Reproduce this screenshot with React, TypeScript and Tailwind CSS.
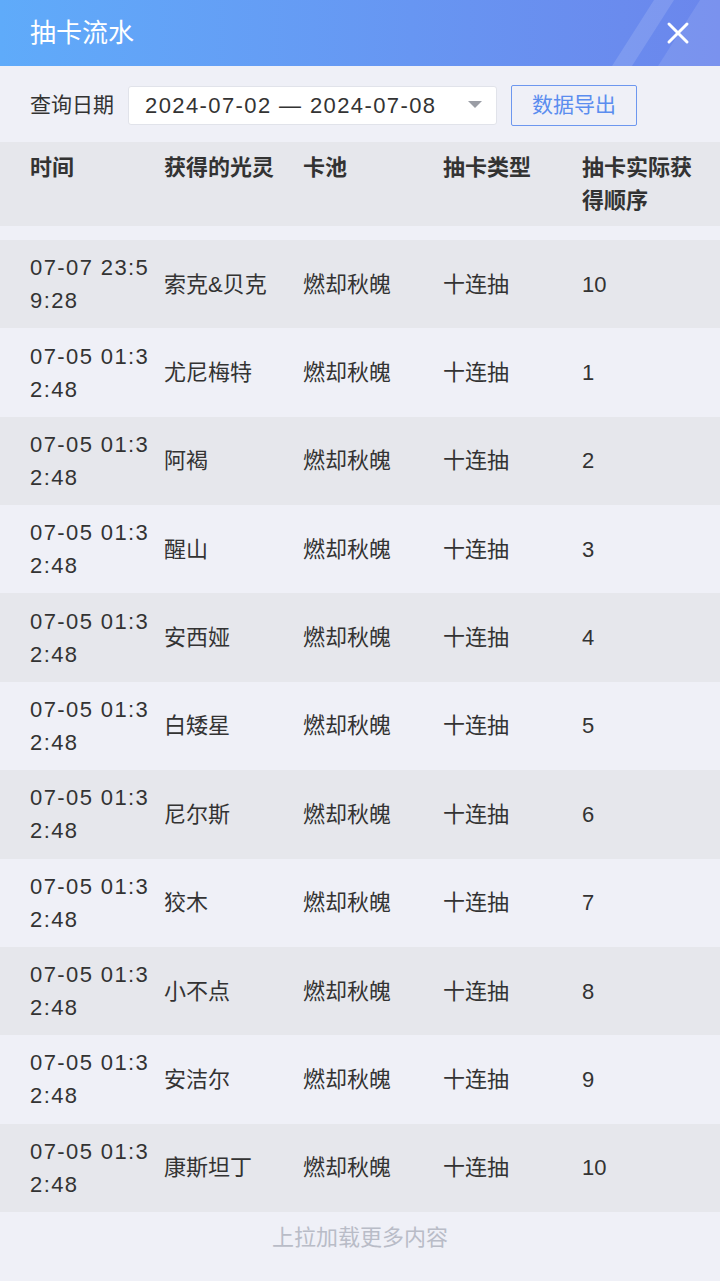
import { X } from "lucide-react";

type Draw = { time: string; name: string; pool: string; kind: string; order: number };

const draws: Draw[] = [
  { time: "07-07 23:59:28", name: "索克&贝克", pool: "燃却秋魄", kind: "十连抽", order: 10 },
  { time: "07-05 01:32:48", name: "尤尼梅特", pool: "燃却秋魄", kind: "十连抽", order: 1 },
  { time: "07-05 01:32:48", name: "阿褐", pool: "燃却秋魄", kind: "十连抽", order: 2 },
  { time: "07-05 01:32:48", name: "醒山", pool: "燃却秋魄", kind: "十连抽", order: 3 },
  { time: "07-05 01:32:48", name: "安西娅", pool: "燃却秋魄", kind: "十连抽", order: 4 },
  { time: "07-05 01:32:48", name: "白矮星", pool: "燃却秋魄", kind: "十连抽", order: 5 },
  { time: "07-05 01:32:48", name: "尼尔斯", pool: "燃却秋魄", kind: "十连抽", order: 6 },
  { time: "07-05 01:32:48", name: "狡木", pool: "燃却秋魄", kind: "十连抽", order: 7 },
  { time: "07-05 01:32:48", name: "小不点", pool: "燃却秋魄", kind: "十连抽", order: 8 },
  { time: "07-05 01:32:48", name: "安洁尔", pool: "燃却秋魄", kind: "十连抽", order: 9 },
  { time: "07-05 01:32:48", name: "康斯坦丁", pool: "燃却秋魄", kind: "十连抽", order: 10 },
];

const font = { fontFamily: '"Liberation Sans", "Noto Sans CJK SC", sans-serif' };

function Header() {
  return (
    <div className="relative h-[66px] flex items-center justify-between pl-[30px] pr-[24px] bg-gradient-to-r from-[#5fabfa] to-[#6b86ec] overflow-hidden">
      <svg className="absolute right-0 top-0" width="120" height="66" viewBox="0 0 120 66">
        <polygon points="12,66 32,66 74,0 54,0" fill="#ffffff" fillOpacity="0.13" />
        <polygon points="58,66 120,66 120,0 100,0" fill="#ffffff" fillOpacity="0.1" />
      </svg>
      <h1 className="relative text-[26px] text-white">抽卡流水</h1>
      <X className="relative w-[36px] h-[36px] text-white" strokeWidth={2} />
    </div>
  );
}

function QueryBar() {
  return (
    <div className="flex items-center h-[76px] pl-[30px] pt-[2px]">
      <span className="text-[21px] text-[#333]">查询日期</span>
      <div className="ml-[14px] w-[369px] h-[39px] bg-white border border-[#e1e3ea] rounded-[3px] flex items-center pl-[16px] pr-[14px]">
        <span className="flex-1 text-[22px] tracking-[1.4px] text-[#333]">2024-07-02 — 2024-07-08</span>
        <svg width="14" height="8" viewBox="0 0 14 8">
          <polygon points="0,0 14,0 7,7" fill="#9a9da5" />
        </svg>
      </div>
      <button className="ml-[14px] w-[126px] h-[41px] border-[1.5px] border-[#6d97ef] rounded-[2px] text-[21px] text-[#5b8def]">
        数据导出
      </button>
    </div>
  );
}

const cols = "grid grid-cols-[134px_139px_140px_139px_110px] pl-[30px]";

export default function App() {
  return (
    <div className="min-h-[1281px] bg-[#eff0f7] text-[#333]" style={font}>
      <Header />
      <QueryBar />
      <div className={`${cols} h-[84px] pt-[9px] bg-[#e6e7ec] font-bold text-[22px] leading-[33px]`}>
        <div>时间</div>
        <div>获得的光灵</div>
        <div>卡池</div>
        <div>抽卡类型</div>
        <div>抽卡实际获得顺序</div>
      </div>
      <div className="h-[14px]" />
      {draws.map((d, i) => (
        <div
          key={i}
          className={`${cols} h-[88.36px] items-center text-[22px] leading-[33px] ${i % 2 === 0 ? "bg-[#e6e7ec]" : "bg-[#eff0f7]"}`}
        >
          <div className="tracking-[1.4px]">
            <div>{d.time.slice(0, 10)}</div>
            <div>{d.time.slice(10)}</div>
          </div>
          <div>{d.name}</div>
          <div>{d.pool}</div>
          <div>{d.kind}</div>
          <div>{d.order}</div>
        </div>
      ))}
      <div className="text-center text-[22px] text-[#b9bcc7] pt-[9px]">上拉加载更多内容</div>
    </div>
  );
}
